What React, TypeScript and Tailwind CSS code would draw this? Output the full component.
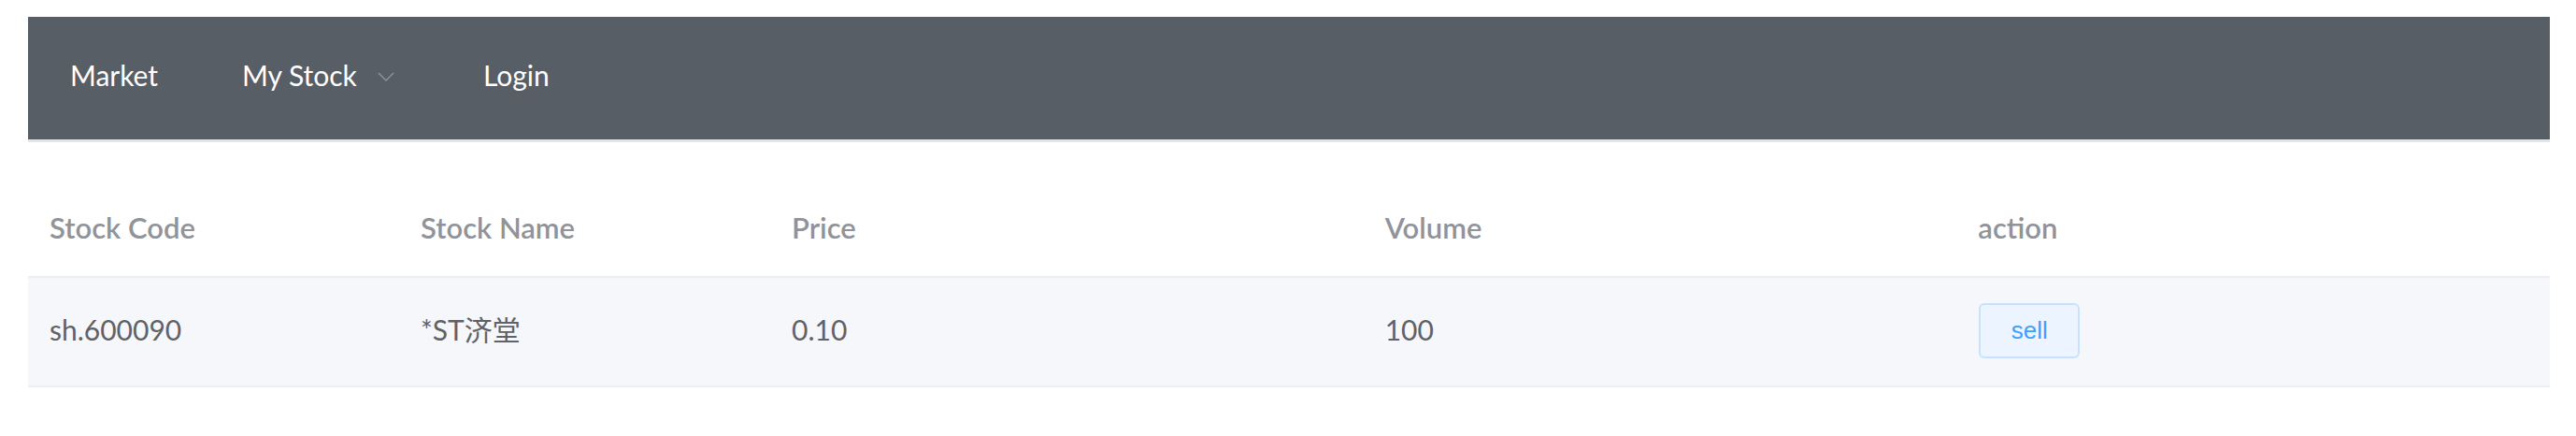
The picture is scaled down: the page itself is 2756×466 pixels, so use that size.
import React from 'react';

const ChevronDown = () => (
  <svg width="18" height="10" viewBox="0 0 18 10" fill="none" className="ml-[22px] mt-[2px]">
    <polyline points="1,1 9,9 17,1" stroke="#8f949b" strokeWidth="1.4" />
  </svg>
);

const rows = [
  { code: 'sh.600090', name: '*ST济堂', price: '0.10', volume: '100' },
];

const App = () => {
  return (
    <div className="w-[2756px] h-[466px] bg-white pt-[18px] pl-[30px] pr-[28px] font-['Lato','Noto_Sans_CJK_SC',sans-serif]">
      {/* top menu */}
      <div className="h-[134px] bg-[#575e66] border-b-[3px] border-[#e4e5e7] flex items-center pb-[6px] text-white text-[30px]">
        <div className="w-[229px] pl-[45px]">Market</div>
        <div className="w-[258px] flex items-center">
          <span>My Stock</span>
          <ChevronDown />
        </div>
        <div>Login</div>
      </div>

      {/* table */}
      <div className="text-[30px]">
        <div className="grid grid-cols-[397px_397px_1fr_1fr_1fr] h-[143px] items-end pb-[29px] text-[31px] text-[#909399] font-semibold">
          <div className="pl-[23px]">Stock Code</div>
          <div className="pl-[23px]">Stock Name</div>
          <div className="pl-[23px]">Price</div>
          <div className="pl-[23px]">Volume</div>
          <div className="pl-[23px]">action</div>
        </div>
        {rows.map((r) => (
          <div
            key={r.code}
            className="grid grid-cols-[397px_397px_1fr_1fr_1fr] h-[119px] items-center bg-[#f5f7fa] border-y-2 border-[#ebeef5] text-[#606266]"
          >
            <div className="pl-[23px] pb-[5px]">{r.code}</div>
            <div className="pl-[23px] pb-[5px]">{r.name}</div>
            <div className="pl-[23px] pb-[5px]">{r.price}</div>
            <div className="pl-[23px] pb-[5px]">{r.volume}</div>
            <div className="pl-[24px] pb-[2px]">
              <button className="w-[108px] h-[59px] rounded-[6px] border-2 border-[#c6e2ff] bg-[#ecf5ff] text-[#409eff] text-[26px] font-['Liberation_Sans',sans-serif] flex items-center justify-center">
                sell
              </button>
            </div>
          </div>
        ))}
      </div>
    </div>
  );
};

export default App;
